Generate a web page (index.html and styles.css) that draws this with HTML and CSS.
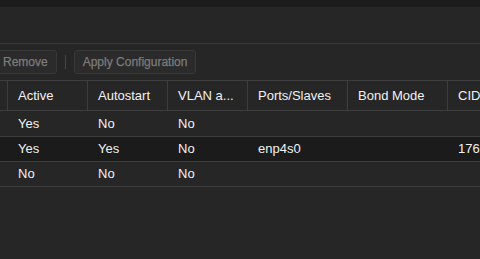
FILE: index.html
```html
<!DOCTYPE html>
<html lang="en">
<head>
  <meta charset="UTF-8" />
  <title>Network</title>
  <link rel="stylesheet" href="styles.css">
</head>
<body>
  <div class="topbar"></div>
  <div class="spacer"></div>

  <div class="toolbar">
    <button class="tb-btn first" disabled>Remove</button>
    <span class="tb-sep"></span>
    <button class="tb-btn" disabled>Apply Configuration</button>
  </div>

  <div class="grid">
    <div class="row head">
      <div class="cell c0"></div>
      <div class="cell c1">Active</div>
      <div class="cell c2">Autostart</div>
      <div class="cell c3">VLAN a...</div>
      <div class="cell c4">Ports/Slaves</div>
      <div class="cell c5">Bond Mode</div>
      <div class="cell c6">CIDR</div>
    </div>
    <div class="row top">
      <div class="cell c0"></div>
      <div class="cell c1">Yes</div>
      <div class="cell c2">No</div>
      <div class="cell c3">No</div>
      <div class="cell c4"></div>
      <div class="cell c5"></div>
      <div class="cell c6"></div>
    </div>
    <div class="row selected">
      <div class="cell c0"></div>
      <div class="cell c1">Yes</div>
      <div class="cell c2">Yes</div>
      <div class="cell c3">No</div>
      <div class="cell c4">enp4s0</div>
      <div class="cell c5"></div>
      <div class="cell c6">176.9.0.0/24</div>
    </div>
    <div class="row">
      <div class="cell c0"></div>
      <div class="cell c1">No</div>
      <div class="cell c2">No</div>
      <div class="cell c3">No</div>
      <div class="cell c4"></div>
      <div class="cell c5"></div>
      <div class="cell c6"></div>
    </div>
  </div>
</body>
</html>
```

FILE: styles.css
```css
html, body {
  margin: 0;
  padding: 0;
}
body {
  width: 480px;
  height: 259px;
  overflow: hidden;
  background-color: #262626;
  font-family: 'Liberation Sans', Arial, Helvetica, sans-serif;
  color: #f2f2f2;
}
.topbar {
  height: 7px;
  background-color: #1b1b1b;
}
.spacer {
  height: 36px;
}
.toolbar {
  display: flex;
  align-items: center;
  box-sizing: border-box;
  height: 37px;
  border-top: 1px solid #3a3a3a;
  white-space: nowrap;
}
.tb-btn {
  height: 24px;
  padding: 0 8px;
  margin-top: -1px;
  background-color: #2b2b2b;
  border: 1px solid #383838;
  border-radius: 3px;
  color: #7c7c7c;
  font-family: inherit;
  font-size: 12px;
  -webkit-text-stroke: 0.25px #7c7c7c;
}
.tb-btn.first {
  margin-left: -6px;
}
.tb-sep {
  width: 1px;
  height: 14px;
  margin: 0 8px;
  background-color: #454545;
}
.grid {
  border-top: 1px solid #3d3d3d;
  white-space: nowrap;
}
.row {
  display: flex;
  height: 24px;
  border-bottom: 1px solid #3d3d3d;
  font-size: 13px;
  line-height: 24px;
}
.row.head {
  height: 29px;
  line-height: 29px;
}
.row.top {
  height: 25px;
  line-height: 25px;
}
.row.selected {
  background-color: #1b1b1b;
}
.cell {
  flex: none;
  box-sizing: border-box;
  padding-left: 11px;
  overflow: hidden;
}
.head .cell + .cell {
  border-left: 1px solid #3d3d3d;
  padding-left: 10px;
}
.c0 { width: 7px; padding: 0; }
.c1, .c2, .c3 { width: 80px; }
.c4, .c5 { width: 100px; }
.c6 { width: 120px; }
```
